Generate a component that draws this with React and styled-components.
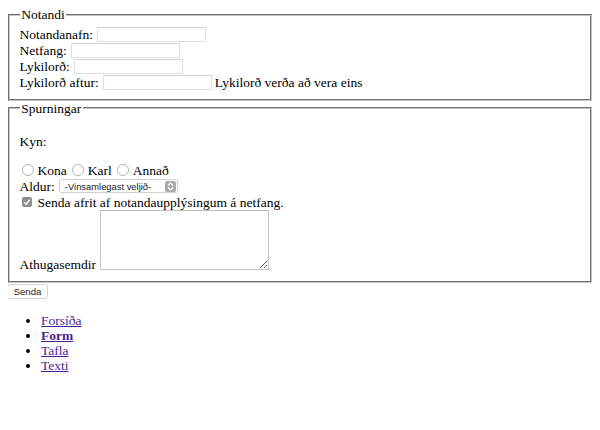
import React from "react";
import styled, { createGlobalStyle } from "styled-components";

const Global = createGlobalStyle`
  html, body { background: #fff; }
  body {
    margin: 7px 8px 8px 8px;
    font-family: "Liberation Serif", "Times New Roman", serif;
    font-size: 13.5px;
    line-height: 15px;
    color: #000;
  }
`;

const Fieldset = styled.fieldset`
  margin: 0;
  padding: 4.5px 9.6px ${(p) => p.$pb || 8}px 9.6px;
  border: 2px groove #c4c4c4;
  min-inline-size: auto;
`;

const Legend = styled.legend`
  padding: 0 1.6px;
  line-height: 15px;
  margin-left: 0;
`;

const Row = styled.div`
  display: flex;
  align-items: center;
  height: 16px;
  gap: 4px;
  white-space: nowrap;
`;

const TextInput = styled.input`
  box-sizing: border-box;
  width: 109px;
  height: 15px;
  margin: 0;
  padding: 0 2px;
  border: 1px solid #e0e0e0;
  border-top-color: #d2d2d2;
  background: #fff;
  font: inherit;
  outline: none;
`;

const Hint = styled.span`
  margin-left: -1px;
`;

const Para = styled.p`
  margin: 13.5px 0 12.5px 0;
  line-height: 16px;
`;

const RadioDot = styled.span`
  box-sizing: border-box;
  display: inline-block;
  width: 12px;
  height: 12px;
  border-radius: 50%;
  border: 1px solid #b4b4b4;
  background: #fff;
  margin-left: ${(p) => (p.$first ? 2 : 1)}px;
`;

const Choice = styled.label`
  display: inline-flex;
  align-items: center;
  gap: 4px;
`;

const SelectBox = styled.span`
  box-sizing: border-box;
  display: inline-flex;
  align-items: center;
  justify-content: space-between;
  width: 119px;
  height: 14px;
  padding: 0 1px 0 5px;
  border: 1px solid #d0d0d0;
  border-radius: 3px;
  background: #fff;
  font-family: "Liberation Sans", Arial, sans-serif;
  font-size: 9.4px;
  color: #222;
`;

const ArrowBox = styled.span`
  display: inline-flex;
  align-items: center;
  justify-content: center;
  width: 11px;
  height: 11px;
  border-radius: 2px;
  background: #a9a9a9;
`;

const CheckBox = styled.span`
  display: inline-flex;
  align-items: center;
  justify-content: center;
  width: 10px;
  height: 10px;
  border-radius: 2px;
  background: #8f8f8f;
  margin-left: 2px;
  margin-right: 2px;
`;

const AreaRow = styled.div`
  display: flex;
  align-items: flex-end;
  gap: 4px;
  padding: 0 0 2px 0;
`;

const AreaLabel = styled.span`
  line-height: 11px;
`;

const TextArea = styled.textarea`
  box-sizing: border-box;
  width: 169px;
  height: 60px;
  margin: 0;
  border: 1px solid #c6c6c6;
  border-top-color: #bdbdbd;
  background: #fff;
  font: inherit;
  resize: both;
  outline: none;
`;

const SubmitButton = styled.button`
  box-sizing: border-box;
  display: block;
  margin: 1px 0 0 -1px;
  width: 41px;
  height: 15px;
  padding: 0;
  border: 1px solid #d2d2d2;
  border-radius: 3px;
  background: #fff;
  font-family: "Liberation Sans", Arial, sans-serif;
  font-size: 9.6px;
  line-height: 13px;
  color: #222;
`;

const Nav = styled.ul`
  margin: 13.5px 0;
  padding-left: 33px;
  line-height: 15px;
`;

const NavLink = styled.a`
  color: #4b1f8f;
  font-weight: ${(p) => (p.$bold ? "bold" : "normal")};
  text-decoration: underline;
`;

function Radio({ label, first }) {
  return (
    <Choice>
      <RadioDot $first={first} />
      {label}
    </Choice>
  );
}

export default function App() {
  return (
    <>
      <Global />
      <form onSubmit={(e) => e.preventDefault()}>
        <Fieldset>
          <Legend>Notandi</Legend>
          <Row>
            Notandanafn: <TextInput type="text" />
          </Row>
          <Row>
            Netfang: <TextInput type="email" />
          </Row>
          <Row>
            Lykilorð: <TextInput type="password" />
          </Row>
          <Row>
            Lykilorð aftur: <TextInput type="password" />
            <Hint>Lykilorð verða að vera eins</Hint>
          </Row>
        </Fieldset>
        <Fieldset $pb={9}>
          <Legend>Spurningar</Legend>
          <Para>Kyn:</Para>
          <Row>
            <Radio label="Kona" first />
            <Radio label="Karl" />
            <Radio label="Annað" />
          </Row>
          <Row>
            Aldur:
            <SelectBox>
              -Vinsamlegast veljið-
              <ArrowBox>
                <svg width="7" height="9" viewBox="0 0 7 9">
                  <path d="M1 3.5 L3.5 1 L6 3.5 M1 5.5 L3.5 8 L6 5.5" fill="none" stroke="#fff" strokeWidth="1.2" />
                </svg>
              </ArrowBox>
            </SelectBox>
          </Row>
          <Row>
            <CheckBox>
              <svg width="8" height="8" viewBox="0 0 8 8">
                <path d="M1.2 4.2 L3.2 6.2 L6.8 1.6" fill="none" stroke="#fff" strokeWidth="1.4" />
              </svg>
            </CheckBox>
            Senda afrit af notandaupplýsingum á netfang.
          </Row>
          <AreaRow>
            <AreaLabel>Athugasemdir</AreaLabel>
            <TextArea />
          </AreaRow>
        </Fieldset>
        <SubmitButton type="submit">Senda</SubmitButton>
      </form>
      <Nav>
        <li><NavLink href="#">Forsíða</NavLink></li>
        <li><NavLink href="#" $bold>Form</NavLink></li>
        <li><NavLink href="#">Tafla</NavLink></li>
        <li><NavLink href="#">Texti</NavLink></li>
      </Nav>
    </>
  );
}
